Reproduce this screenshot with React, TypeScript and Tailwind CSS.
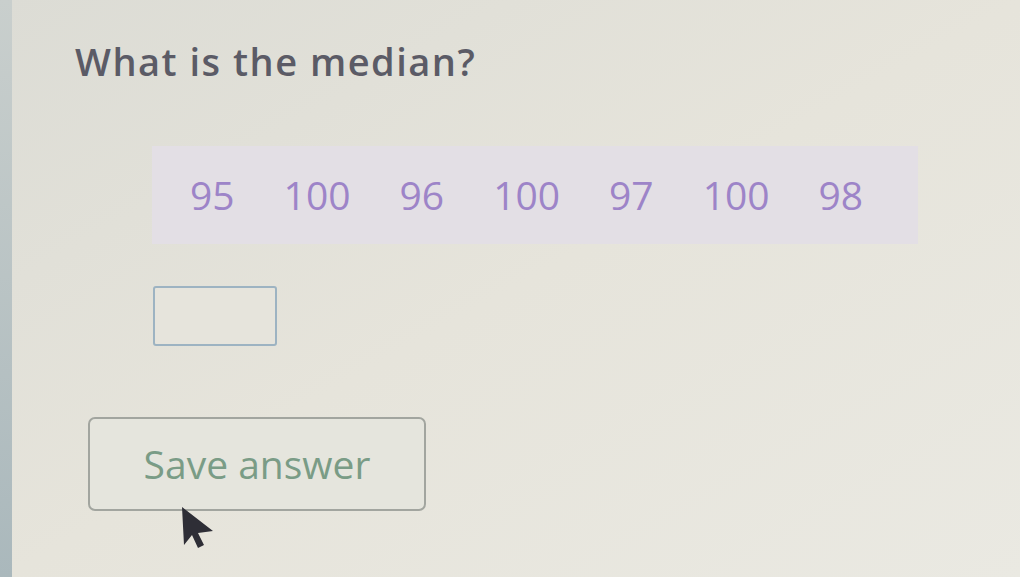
import React from 'react';

const values = [95, 100, 96, 100, 97, 100, 98];

export default function App() {
  return (
    <div className="relative flex h-[577px] w-[1020px] overflow-hidden bg-gradient-to-br from-[#dcdcd5] via-[#e6e4db] to-[#eae9e2] font-['Open_Sans',sans-serif]">
      {/* left edge of monitor */}
      <div className="w-[12px] shrink-0 bg-gradient-to-b from-[#c9cfcd] to-[#aab8bc]" />

      <div className="flex flex-1 flex-col pl-[63px] pt-[36px]">
        <h1 className="text-[38px] font-semibold leading-[50px] tracking-[1.5px] text-[#5b5b66]">
          What is the median?
        </h1>

        {/* data strip */}
        <div className="ml-[77px] mt-[60px] flex h-[98px] w-[766px] items-center gap-[49px] bg-[#e3dfe5] pl-[38px] text-[39px] text-[#9d84c8]">
          {values.map((v, i) => (
            <span key={i}>{v}</span>
          ))}
        </div>

        {/* answer input */}
        <div className="ml-[78px] mt-[42px] h-[60px] w-[124px] rounded-[3px] border-2 border-[#9db3c2] bg-[#e6e4dc]" />

        {/* save button */}
        <button className="ml-[13px] mt-[71px] flex h-[94px] w-[338px] items-center justify-center rounded-[7px] border-2 border-[#a2a59f] bg-[#e5e5dd] text-[39px] text-[#7a9c86]">
          Save answer
        </button>
      </div>

      {/* mouse pointer */}
      <svg
        className="absolute left-[180px] top-[505px]"
        width="36"
        height="44"
        viewBox="0 0 36 44"
      >
        <path d="M2 2 L4 40 L12 30 L18 43 L24 40 L18 28 L33 26 Z" fill="#2e2e36" />
      </svg>
    </div>
  );
}
